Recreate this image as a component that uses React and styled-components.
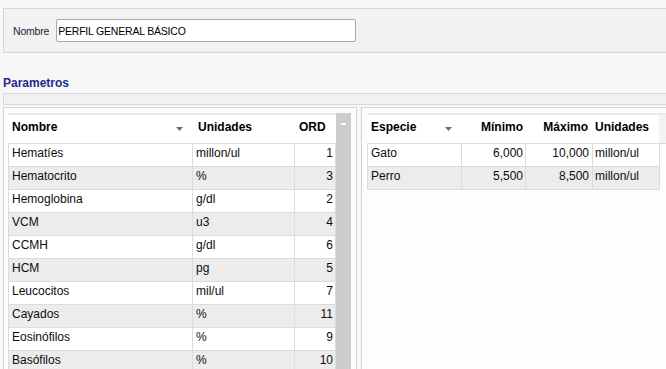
import React from "react"
import styled, { createGlobalStyle } from "styled-components"

const GlobalStyle = createGlobalStyle`
  html, body {
    margin: 0;
    padding: 0;
    background: #f7f7f7;
  }
  body {
    font-family: "Liberation Sans", Arial, sans-serif;
    color: #0c0c0c;
  }
`

const Page = styled.div`
  width: 666px;
  height: 369px;
  overflow: hidden;
  padding-left: 3px;
  box-sizing: border-box;
`

const TopPanel = styled.div`
  margin-top: 8px;
  height: 45px;
  width: 700px;
  box-sizing: border-box;
  border: 1px solid #d6d6d6;
  background: #f2f2f2;
  display: flex;
  align-items: center;
  padding-left: 9px;
  gap: 7px;
  font-size: 10.5px;
  letter-spacing: -0.2px;
`

const Label = styled.span`
  color: #1c1c3c;
`

const TextInput = styled.div`
  width: 300px;
  height: 23px;
  box-sizing: border-box;
  border: 1px solid #a8a8a8;
  border-radius: 2px;
  background: #fff;
  display: flex;
  align-items: center;
  padding-left: 1px;
  color: #000;
`

const Heading = styled.div`
  margin-top: 23px;
  height: 14px;
  line-height: 14px;
  font-size: 12px;
  font-weight: bold;
  color: #1f2a8a;
`

const Bar = styled.div`
  margin-top: 3px;
  width: 700px;
  height: 12px;
  box-sizing: border-box;
  border: 1px solid #d8d8d8;
  background: #f1f1f1;
`

const Panels = styled.div`
  margin-top: 2px;
  display: flex;
  gap: 4px;
  width: 720px;
`

const Panel = styled.div`
  box-sizing: border-box;
  width: ${p => p.$width}px;
  height: 300px;
  border: 1px solid #d4d4d4;
  background: #fdfdfd;
  padding: 5px ${p => p.$padRight}px 0 ${p => p.$padLeft}px;
  display: flex;
  align-items: flex-start;
`

const Grid = styled.div`
  width: ${p => p.$width}px;
  font-size: 12px;
`

const HeaderRow = styled.div`
  display: grid;
  grid-template-columns: ${p => p.$cols};
  height: 31px;
  box-sizing: border-box;
  border-top: 2px solid #ebebeb;
  border-bottom: 1px solid #dcdcdc;
  background: #fff;
`

const HeadCell = styled.div`
  display: flex;
  align-items: flex-start;
  justify-content: ${p => (p.$right ? "flex-end" : "space-between")};
  padding: 5px ${p => p.$pr ?? 4}px 0 ${p => p.$pl ?? 4}px;
  line-height: 14px;
  font-weight: bold;
  color: #000;
  white-space: nowrap;
`

const SortArrow = styled.svg`
  margin-top: 7px;
  margin-right: 5px;
`

const Row = styled.div`
  display: grid;
  grid-template-columns: ${p => p.$cols};
  width: ${p => p.$width}px;
  height: 23px;
  box-sizing: border-box;
  border-left: 1px solid #dcdcdc;
  border-bottom: 1px solid #dcdcdc;
  background: ${p => (p.$alt ? "#ececec" : "#fff")};
`

const Cell = styled.div`
  border-right: 1px solid #dcdcdc;
  padding: 2px ${p => p.$pr ?? 3}px 0 ${p => p.$pl ?? 3}px;
  line-height: 14px;
  text-align: ${p => (p.$right ? "right" : "left")};
  white-space: nowrap;
  overflow: hidden;
`

const Scrollbar = styled.div`
  width: 15px;
  height: 300px;
  background: #cdcdcd;
  display: flex;
  justify-content: center;
  padding-top: 10px;
  box-sizing: border-box;
  &::before {
    content: "";
    width: 5px;
    height: 2px;
    background: #fff;
  }
`

const Filler = styled.div`
  background: #f3f3f3;
`

const Arrow = () => (
  <SortArrow width="7" height="4" viewBox="0 0 7 4">
    <path d="M0 0 L7 0 L3.5 4 Z" fill="#6e6e6e" />
  </SortArrow>
)

const leftCols = "184px 102px 41px"
const rightCols = "94px 64px 67px 67px"

const parametros = [
  ["Hematíes", "millon/ul", 1],
  ["Hematocrito", "%", 3],
  ["Hemoglobina", "g/dl", 2],
  ["VCM", "u3", 4],
  ["CCMH", "g/dl", 6],
  ["HCM", "pg", 5],
  ["Leucocitos", "mil/ul", 7],
  ["Cayados", "%", 11],
  ["Eosinófilos", "%", 9],
  ["Basófilos", "%", 10],
]

const rangos = [
  ["Gato", "6,000", "10,000", "millon/ul"],
  ["Perro", "5,500", "8,500", "millon/ul"],
]

const App = () => {
  return (
    <Page>
      <GlobalStyle />
      <TopPanel>
        <Label>Nombre</Label>
        <TextInput>PERFIL GENERAL BÁSICO</TextInput>
      </TopPanel>
      <Heading>Parametros</Heading>
      <Bar />
      <Panels>
        <Panel $width={354} $padLeft={4} $padRight={5}>
          <Grid $width={328}>
            <HeaderRow $cols={leftCols}>
              <HeadCell $pl={4}>
                Nombre
                <Arrow />
              </HeadCell>
              <HeadCell $pl={6}>Unidades</HeadCell>
              <HeadCell $pl={5}>ORD</HeadCell>
            </HeaderRow>
            {parametros.map(([nombre, unidad, ord], i) => (
              <Row key={nombre} $cols={leftCols} $width={328} $alt={i % 2 === 1}>
                <Cell>{nombre}</Cell>
                <Cell>{unidad}</Cell>
                <Cell $right $pr={2}>
                  {ord}
                </Cell>
              </Row>
            ))}
          </Grid>
          <Scrollbar />
        </Panel>
        <Panel $width={360} $padLeft={5} $padRight={0}>
          <Grid $width={299}>
            <HeaderRow $cols={rightCols + " 1fr"}>
              <HeadCell $pl={4}>
                Especie
                <Arrow />
              </HeadCell>
              <HeadCell $right $pr={2}>
                Mínimo
              </HeadCell>
              <HeadCell $right $pr={4}>
                Máximo
              </HeadCell>
              <HeadCell $pl={3}>Unidades</HeadCell>
              <Filler />
            </HeaderRow>
            {rangos.map(([especie, min, max, unidad], i) => (
              <Row key={especie} $cols={rightCols} $width={293} $alt={i % 2 === 1}>
                <Cell>{especie}</Cell>
                <Cell $right $pr={2}>
                  {min}
                </Cell>
                <Cell $right $pr={3}>
                  {max}
                </Cell>
                <Cell $pl={2}>{unidad}</Cell>
              </Row>
            ))}
          </Grid>
        </Panel>
      </Panels>
    </Page>
  )
}

export default App
